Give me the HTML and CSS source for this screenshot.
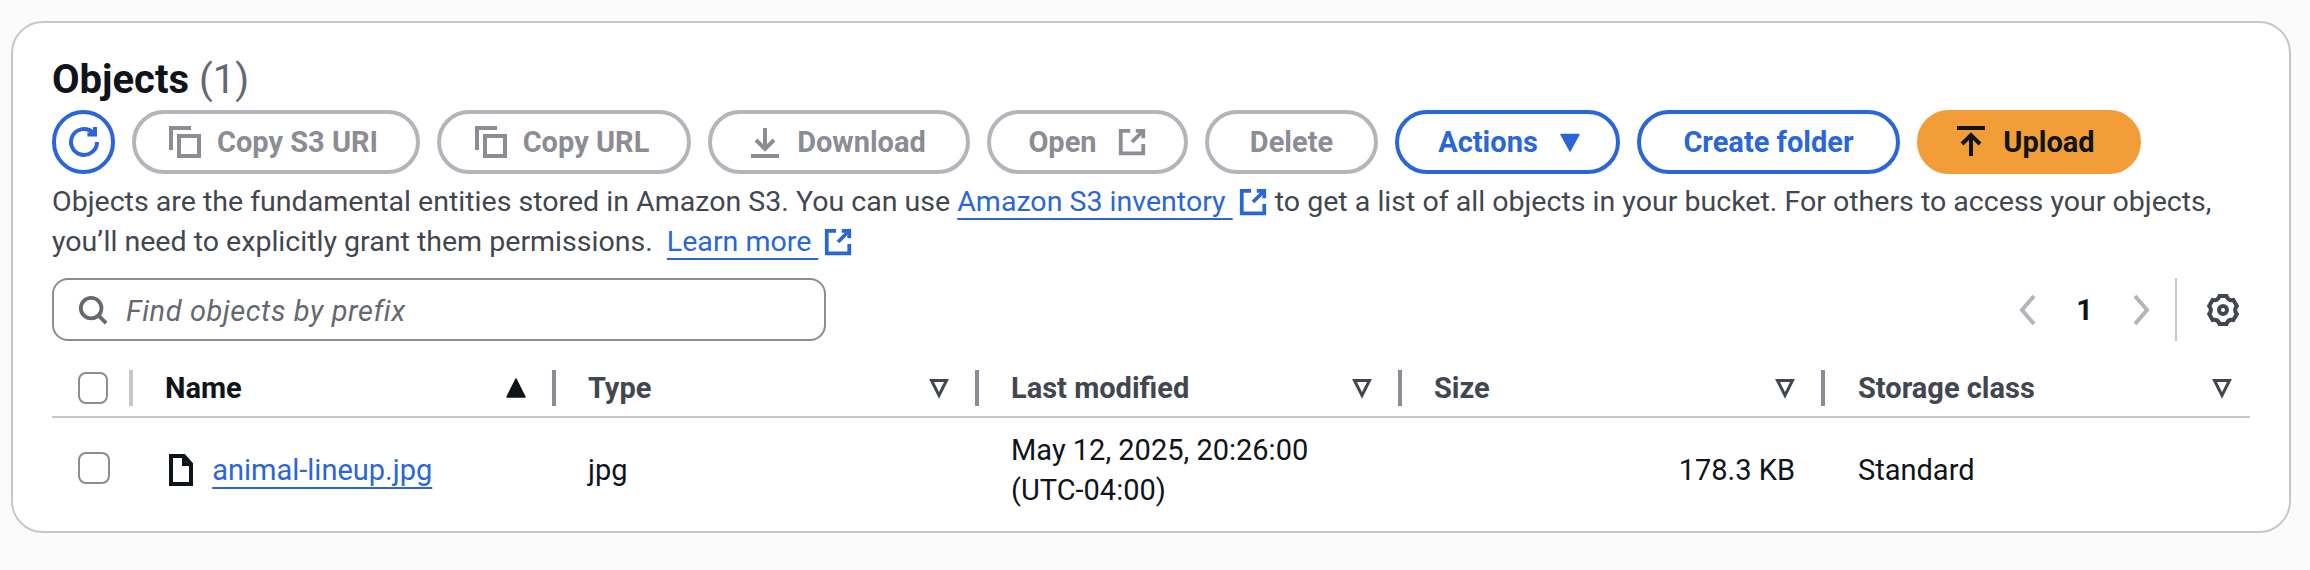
FILE: index.html
```html
<!DOCTYPE html>
<html>
<head>
<meta charset="utf-8" />
<title>Objects</title>
<link rel="stylesheet" href="styles.css">
</head>
<body>
<div class="card">
	<h2 class="title">Objects <span class="count">(1)</span></h2>

	<div class="actions">
		<button class="btn btn-refresh" aria-label="Refresh">
			<svg class="ico" viewBox="0 0 16 16"><path d="M14.5 8a6.5 6.5 0 1 1-2-4.7"/><path d="M13.5 .5v3.8H9.7"/></svg>
		</button>
		<button class="btn btn-s3uri" disabled>
			<svg class="ico" viewBox="0 0 16 16"><path d="M1 12V1h10"/><path d="M5 5h10v10H5z"/></svg>
			Copy S3 URI
		</button>
		<button class="btn btn-url" disabled>
			<svg class="ico" viewBox="0 0 16 16"><path d="M1 12V1h10"/><path d="M5 5h10v10H5z"/></svg>
			Copy URL
		</button>
		<button class="btn btn-download" disabled>
			<svg class="ico" viewBox="0 0 16 16"><path d="M1 15h14"/><path d="M8 1v10"/><path d="M3.5 7 8 11.5 12.5 7"/></svg>
			Download
		</button>
		<button class="btn btn-open" disabled>
			Open
			<svg class="ico ico-ext" viewBox="0 0 16 16"><path d="M7 2H2v12h12V9"/><path d="M14 2 8 8"/><path d="M10 2h4v4"/></svg>
		</button>
		<button class="btn btn-delete" disabled>Delete</button>
		<button class="btn btn-blue btn-actions">
			Actions
			<svg class="ico ico-caret" viewBox="0 0 16 16"><path class="solid" d="M2 3h12L8 14z"/></svg>
		</button>
		<button class="btn btn-blue btn-folder">Create folder</button>
		<button class="btn btn-primary">
			<svg class="ico" viewBox="0 0 16 16"><path d="M1 1h14"/><path d="M8 15V5"/><path d="M3.5 9 8 4.500 12.500 9"/></svg>
			Upload
		</button>
	</div>

	<p class="desc">Objects are the fundamental entities stored in Amazon S3. You can use <a href="#">Amazon S3 inventory </a><svg class="ico ico-ext link-ext" viewBox="0 0 16 16"><path d="M7 2H2v12h12V9"/><path d="M14 2 8 8"/><path d="M10 2h4v4"/></svg> to get a list of all objects in your bucket. For others to access your objects, you’ll need to explicitly grant them permissions. <a class="learn" href="#">Learn more </a><svg class="ico ico-ext link-ext" viewBox="0 0 16 16"><path d="M7 2H2v12h12V9"/><path d="M14 2 8 8"/><path d="M10 2h4v4"/></svg></p>

	<div class="filter-row">
		<div class="search">
			<svg class="ico ico-search" viewBox="0 0 16 16"><circle cx="7" cy="7" r="5.500"/><path d="m11 11 4 4"/></svg>
			<span class="placeholder">Find objects by prefix</span>
		</div>
		<div class="pager">
			<svg class="ico chev" viewBox="0 0 16 16"><path d="M11 1 5 8l6 7"/></svg>
			<span class="page-num">1</span>
			<svg class="ico chev" viewBox="0 0 16 16"><path d="m5 1 6 7-6 7"/></svg>
		</div>
		<div class="prefs">
			<svg class="ico gear" viewBox="0 0 16 16"><circle cx="8" cy="8" r="2"/><path d="M6.260 1.020H9.740Q10.600 3.500 13.180 3L14.920 6.010Q13.200 8 14.920 9.990L13.180 13Q10.600 12.500 9.740 14.980H6.260Q5.400 12.500 2.820 13L1.080 9.990Q2.800 8 1.080 6.010L2.820 3Q5.400 3.500 6.260 1.020z"/></svg>
		</div>
	</div>

	<table class="objects">
		<colgroup>
			<col class="col-check"><col class="col-data"><col class="col-data"><col class="col-data"><col class="col-data"><col>
		</colgroup>
		<thead>
			<tr>
				<th><div class="th-in sep-light"><span class="check"></span></div></th>
				<th><div class="th-in name-head">Name<svg class="ico sort" viewBox="0 0 16 16"><path class="solid" d="M8 2 14 14H2z"/></svg></div></th>
				<th><div class="th-in">Type<svg class="ico sort" viewBox="0 0 16 16"><path d="M3 3h10L8 13z"/></svg></div></th>
				<th><div class="th-in">Last modified<svg class="ico sort" viewBox="0 0 16 16"><path d="M3 3h10L8 13z"/></svg></div></th>
				<th><div class="th-in">Size<svg class="ico sort" viewBox="0 0 16 16"><path d="M3 3h10L8 13z"/></svg></div></th>
				<th><div class="th-in no-sep">Storage class<svg class="ico sort" viewBox="0 0 16 16"><path d="M3 3h10L8 13z"/></svg></div></th>
			</tr>
		</thead>
		<tbody>
			<tr>
				<td class="cell-check"><span class="check"></span></td>
				<td class="cell-name">
					<svg class="ico file" viewBox="0 0 16 16"><path d="M9.500 1H3v14h10V5z"/><path d="M9.500 1v4H13"/></svg>
					<a href="#">animal-lineup.jpg</a>
				</td>
				<td>jpg</td>
				<td>May 12, 2025, 20:26:00<br>(UTC-04:00)</td>
				<td class="num">178.3 KB</td>
				<td class="cell-class">Standard</td>
			</tr>
		</tbody>
	</table>
</div>
</body>
</html>
```

FILE: styles.css
```css
html { margin: 0 }
body {
	margin: 0;
	padding: 21px 19px 37px 11px;
	background: #fbfbfb;
	color: #424650;
	font-family: Roboto, "Liberation Sans", sans-serif;
	font-size: 29px;
	line-height: 40px;
}

a {
	color: #2a66d9;
	text-decoration: underline;
	text-decoration-thickness: 2px;
	text-underline-offset: 7px;
}

.card {
	height: 512px;
	box-sizing: border-box;
	padding: 34px 39px 0;
	background: #fff;
	border: 2px solid #c6c6cd;
	border-radius: 32px;
}

.title {
	margin: 0 0 7px;
	color: #0f141a;
	font-size: 40px;
	line-height: 46px;
	font-weight: 700;
}
.count {
	color: #656871;
	font-weight: 400;
}

/* icons: 16 unit grid, drawn at 2x */
.ico {
	width: 32px;
	height: 32px;
	flex: none;
	fill: none;
	stroke: currentColor;
	stroke-width: 2;
}
.ico .solid {
	fill: currentColor;
	stroke-width: 1;
	stroke-linejoin: round;
}

/* button row */
.actions {
	display: flex;
	gap: 17px;
}
.btn {
	display: flex;
	align-items: center;
	justify-content: center;
	gap: 16px;
	height: 64px;
	box-sizing: border-box;
	padding: 0;
	background: #fff;
	border: 4px solid #b4b4bb;
	border-radius: 32px;
	color: #8c8c94;
	font: 700 29px Roboto, "Liberation Sans", sans-serif;
}
.btn-refresh {
	width: 63px;
	border-color: #2a66d9;
	color: #2a66d9;
}
.btn-s3uri { width: 288px; padding-right: 5px; }
.btn-url { width: 254px; padding-right: 4px; }
.btn-download { width: 262px; padding-right: 3px; }
.btn-open { width: 201px; gap: 20px; }
.btn-delete { width: 173px; }
.btn-actions { width: 225px; gap: 20px; padding-left: 5px; }
.btn-folder { width: 263px; }
.btn-blue {
	border-color: #2a66d9;
	color: #2a66d9;
}
.btn-primary {
	width: 224px;
	padding-right: 8px;
	background: #f29d38;
	border-color: #f29d38;
	color: #0f141a;
}
.ico-caret { width: 24px; height: 24px; }

.desc {
	margin: 8px 0 16px;
	font-size: 28.55px;
}
.ico-ext { width: 30px; height: 30px; }
.link-ext {
	margin-left: 5px;
	color: #2a66d9;
	vertical-align: -6px;
}
.learn { margin-left: 7px; }

/* search + pagination */
.filter-row {
	display: flex;
	align-items: center;
	height: 63px;
}
.search {
	display: flex;
	align-items: center;
	gap: 18px;
	width: 774px;
	height: 63px;
	box-sizing: border-box;
	padding-left: 24px;
	border: 2px solid #8c8c94;
	border-radius: 16px;
	color: #656871;
}
.ico-search { width: 30px; height: 30px; }
.placeholder {
	font-style: italic;
	letter-spacing: .6px;
	position: relative;
	top: 1px;
}
.pager {
	display: flex;
	align-items: center;
	gap: 32px;
	margin-left: auto;
	padding-right: 18px;
	color: #b4b4bb;
}
.page-num {
	color: #0f141a;
	font-weight: 700;
}
.prefs {
	display: flex;
	align-items: center;
	height: 63px;
	padding: 0 11px 0 30px;
	border-left: 2px solid #c6c6cd;
	color: #424650;
}

/* table */
.objects {
	width: 2198px;
	margin-top: 29px;
	border-collapse: collapse;
	table-layout: fixed;
}
.col-check { width: 81px; }
.col-data { width: 423px; }
.objects th {
	padding: 0 0 10px;
	border-bottom: 2px solid #c6c6cd;
	text-align: left;
	font-weight: 700;
}
.th-in {
	display: flex;
	align-items: center;
	justify-content: space-between;
	height: 36px;
	box-sizing: border-box;
	padding: 0 24px 0 32px;
	border-right: 4px solid #8c8c94;
}
.th-in.no-sep { border-right: 0; padding: 0 16px 0 33px; }
.th-in.sep-light { border-color: #c6c6cd; padding: 0 21px 0 26px; }
.th-in.name-head { color: #0f141a; }
.sort { width: 24px; height: 24px; }
.objects td {
	height: 104px;
	padding: 0 0 10px 32px;
	color: #0f141a;
	vertical-align: middle;
}
.objects td.cell-check {
	height: 100px;
	padding: 0 0 14px 26px;
}
.objects td.cell-class { padding-left: 33px; }
.objects td.num {
	padding: 0 30px 10px 0;
	text-align: right;
}
.check {
	display: block;
	width: 32px;
	height: 32px;
	box-sizing: border-box;
	background: #fff;
	border: 2px solid #8c8c94;
	border-radius: 8px;
}
.objects td.cell-name {
	white-space: nowrap;
}
.file {
	margin-right: 8px;
	vertical-align: -6px;
}
```
